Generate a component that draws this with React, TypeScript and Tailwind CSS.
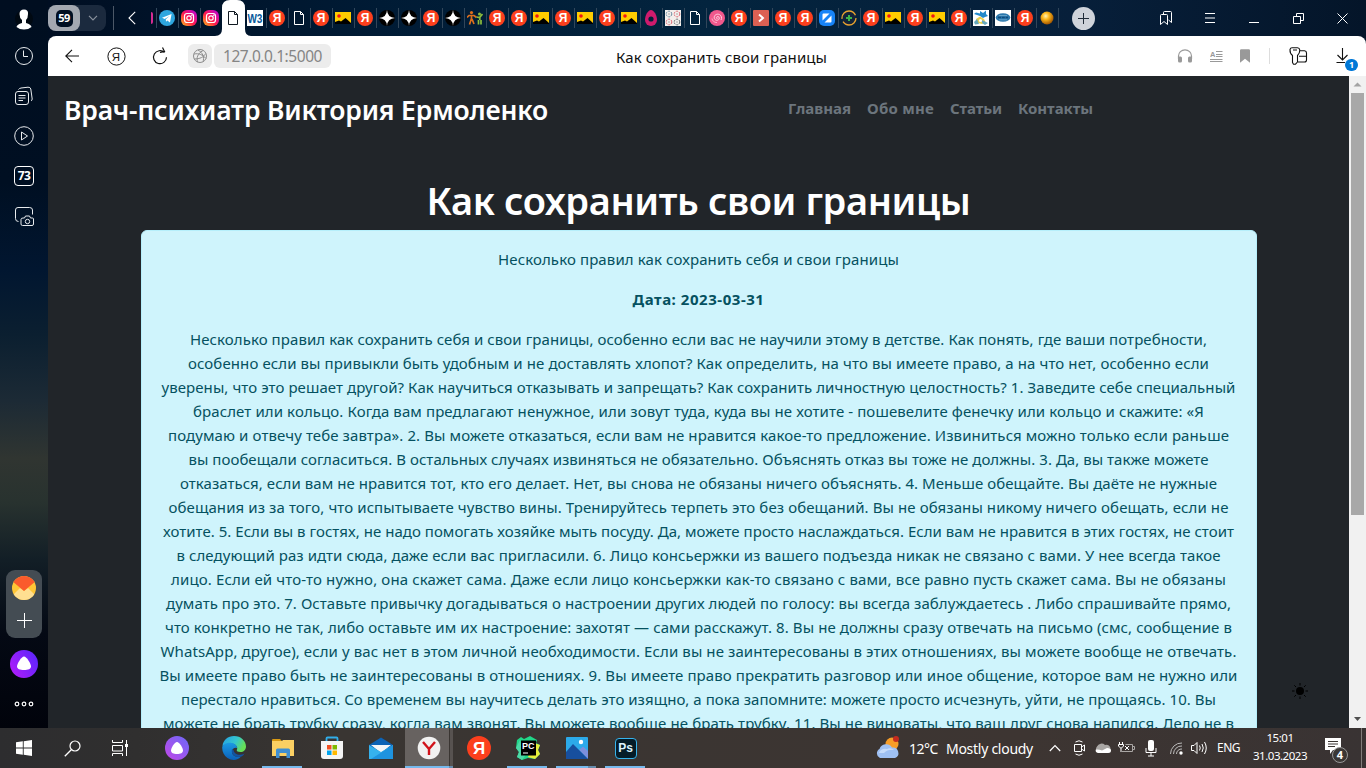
import { useLayoutEffect, useRef, useState } from "react";
import type { ReactNode } from "react";

/* One line of text whose tracking is adjusted so that it spans `w` pixels. */
function Fit({ w, children, className = "" }: { w: number; children: string; className?: string }) {
  const ref = useRef<HTMLSpanElement>(null);
  const [track, setTrack] = useState(0);
  useLayoutEffect(() => {
    if (ref.current) {
      const natural = ref.current.getBoundingClientRect().width - track * children.length;
      setTrack((w - natural) / children.length);
    }
  }, [w, children]);
  return (
    <span ref={ref} className={`inline-block whitespace-nowrap ${className}`} style={{ letterSpacing: `${track}px` }}>
      {children}
    </span>
  );
}

function Svg({ w, h, children, className = "" }: { w: number; h: number; children: ReactNode; className?: string }) {
  return (
    <svg width={w} height={h} viewBox={`0 0 ${w} ${h}`} fill="none" className={`shrink-0 ${className}`}>
      {children}
    </svg>
  );
}

const sans = "font-['Noto_Sans','Open_Sans',sans-serif]";

function YaLetter({ size, fill = "#fff", y }: { size: number; fill?: string; y: number }) {
  return (
    <text x="50%" y={y} textAnchor="middle" fontSize={size} fontWeight="700" fill={fill} fontFamily="Liberation Sans, sans-serif">
      Я
    </text>
  );
}

type Fav = "tg" | "ig" | "page" | "w3" | "ya" | "img" | "star" | "people" | "drop" | "pattern" | "spiral" | "arrow" | "blue" | "plus" | "cartoon" | "oval" | "gold";

function Favicon({ kind }: { kind: Fav }) {
  switch (kind) {
    case "tg":
      return (
        <Svg w={16} h={16}>
          <circle cx="8" cy="8" r="8" fill="#2ea6df" />
          <path d="M3 7.7L12.6 4 11 12.4 8.3 10.5 7 11.8 6.8 9.3 10.6 5.9 5.7 8.9z" fill="#fff" />
        </Svg>
      );
    case "ig":
      return (
        <Svg w={16} h={16}>
          <defs>
            <linearGradient id="ig" x1="0" y1="1" x2="1" y2="0">
              <stop offset="0" stopColor="#ffc21c" />
              <stop offset=".45" stopColor="#ff194b" />
              <stop offset="1" stopColor="#b500e8" />
            </linearGradient>
          </defs>
          <rect width="16" height="16" rx="6" fill="url(#ig)" />
          <rect x="3.5" y="3.5" width="9" height="9" rx="2.5" stroke="#fff" strokeWidth="1.2" />
          <circle cx="8" cy="8" r="2.2" stroke="#fff" strokeWidth="1.2" />
          <circle cx="10.8" cy="5.2" r=".7" fill="#fff" />
        </Svg>
      );
    case "page":
      return (
        <Svg w={12} h={16}>
          <path d="M1.5 1.5H7.5L10.5 4.5V14.5H1.5ZM7.5 1.5V4.5H10.5" stroke="currentColor" />
        </Svg>
      );
    case "w3":
      return (
        <Svg w={16} h={16}>
          <rect width="16" height="16" fill="#fff" />
          <text x="0.6" y="12.5" fontSize="12.5" fontWeight="700" fill="#075a9c" textLength="9.4" lengthAdjust="spacingAndGlyphs" fontFamily="Liberation Sans, sans-serif">W</text>
          <text x="9.7" y="12.5" fontSize="12.5" fontWeight="700" fill="#075a9c" textLength="5.6" lengthAdjust="spacingAndGlyphs" fontFamily="Liberation Sans, sans-serif">3</text>
        </Svg>
      );
    case "ya":
      return (
        <Svg w={16} h={16}>
          <circle cx="8" cy="8" r="8" fill="#fc3f1d" />
          <YaLetter size={12} y={12.2} />
        </Svg>
      );
    case "img":
      return (
        <Svg w={16} h={16}>
          <rect y="2" width="16" height="12" fill="#fc0" />
          <circle cx="4" cy="6" r="1.8" fill="#f01414" />
          <path d="M0 14V12L4 10.5 6 11.5 10.5 8 16 13V14Z" fill="#000" />
        </Svg>
      );
    case "star":
      return (
        <Svg w={16} h={16}>
          <circle cx="8" cy="8" r="8" fill="#000" />
          <path d="M8 0Q8.4 7.6 16 8 8.4 8.4 8 16 7.6 8.4 0 8 7.6 7.6 8 0Z" fill="#fff" />
          <path d="M8 4.5Q9 7 11.5 8 9 9 8 11.5 7 9 4.5 8 7 7 8 4.5Z" fill="#fff" />
        </Svg>
      );
    case "people":
      return (
        <Svg w={16} h={16}>
          <circle cx="4.5" cy="2.6" r="1.6" fill="#dd6f1c" />
          <path d="M0 7.500L2 5.500H7L9.500 7.500M4.500 5V9M4.300 9L2.500 14.500M5 9L7 14" stroke="#dd6f1c" strokeWidth="1.700" />
          <circle cx="12.500" cy="4" r="1.500" fill="#8cbf3c" />
          <path d="M9.500 7L12.500 7.500 15.500 4M12.800 7V10M11.500 10V14.500M14 10V14.500" stroke="#8cbf3c" strokeWidth="1.700" />
        </Svg>
      );
    case "drop":
      return (
        <Svg w={16} h={16}>
          <path d="M8 0C11 0 14 5.500 14 10A6 6 0 0 1 2 10C2 5.500 5 0 8 0Z" fill="#cf1b6d" />
          <circle cx="8" cy="9" r="2.600" fill="#03203a" />
        </Svg>
      );
    case "pattern":
      return (
        <Svg w={16} h={16}>
          <rect width="16" height="16" fill="#f3efec" />
          <circle cx="4" cy="4" r="2.800" stroke="#63869c" strokeDasharray="2 1" />
          <circle cx="12" cy="4" r="2.800" stroke="#d95d6b" strokeDasharray="2 1" />
          <circle cx="4" cy="12" r="2.800" stroke="#d95d6b" strokeDasharray="2 1" />
          <circle cx="12" cy="12" r="2.800" stroke="#5c6468" strokeDasharray="2 1" />
          <path d="M3 4H5M11 4H13M3 12H5M11 12H13" stroke="#aaa" />
        </Svg>
      );
    case "spiral":
      return (
        <Svg w={16} h={16}>
          <circle cx="8" cy="8" r="8" fill="#f0588c" />
          <path d="M8.500 8.500C7.500 9 6.800 7.500 8 6.800 9.500 6 11 7.500 10 9.200 8.800 11 5.500 10.500 5.200 7.800 5 5 8 3.400 10.500 4.600 12.500 5.500 13 8 12 10" stroke="#ffd3e2" strokeWidth="1" />
          <path d="M8 12.600C5 12.600 3.200 10.500 3 8.500" stroke="#ffb5ce" strokeWidth=".9" />
        </Svg>
      );
    case "arrow":
      return (
        <Svg w={16} h={16}>
          <rect width="16" height="16" rx="1" fill="#dc6053" />
          <path d="M6 4.500L10 8 6 11.500" stroke="#fff" strokeWidth="1.900" />
        </Svg>
      );
    case "blue":
      return (
        <Svg w={16} h={16}>
          <rect width="16" height="16" rx="5" fill="#1784f8" />
          <path d="M3.500 4.500Q3.500 3.500 4.500 3.500H10.500L3.500 10.500ZM12.500 5.500V11.500Q12.500 12.500 11.500 12.500H5.500Z" fill="#fff" />
        </Svg>
      );
    case "plus":
      return (
        <Svg w={16} h={16}>
          <circle cx="8" cy="8" r="7" fill="#14243a" stroke="#e9a32f" strokeWidth="1.300" strokeDasharray="18 3 20 3" />
          <path d="M8 5V11M5 8H11" stroke="#3bb54a" strokeWidth="2" />
        </Svg>
      );
    case "cartoon":
      return (
        <Svg w={16} h={16}>
          <rect width="16" height="16" fill="#fff" />
          <path d="M7 1L10 3 13 0.500 13 4 15 6 12 7 10 8 7 6 1 4 3 2.500 7 3.500Z" fill="#2389ca" />
          <path d="M3 9L7 6.500 11 9 13 13 9 14 5 13Z" fill="#e9cf4f" />
          <path d="M1 12L4 9 6 14 2 14.500ZM9 10L15 13 12 15 9 13Z" fill="#65a7be" />
          <circle cx="7.500" cy="10.500" r="1.600" fill="#fff" />
        </Svg>
      );
    case "oval":
      return (
        <Svg w={16} h={16}>
          <rect width="16" height="16" fill="#fff" />
          <ellipse cx="8" cy="7.500" rx="7.300" ry="4.300" fill="#2a77ac" />
          <path d="M4 5.500H12M4 9.800H12" stroke="#7fb3d3" strokeWidth=".7" />
          <path d="M3 7.500H13" stroke="#0f4a7c" strokeWidth="1.500" strokeDasharray="3 .8" />
        </Svg>
      );
    case "gold":
      return (
        <Svg w={16} h={16}>
          <defs>
            <radialGradient id="gold" cx=".4" cy=".35" r=".65">
              <stop offset="0" stopColor="#fff4ba" />
              <stop offset=".4" stopColor="#fdb91c" />
              <stop offset="1" stopColor="#a35500" />
            </radialGradient>
          </defs>
          <circle cx="8" cy="8" r="6.500" fill="url(#gold)" />
        </Svg>
      );
  }
}

const tabsBefore: Fav[] = ["tg", "ig", "ig"];
const tabsAfter: Fav[] = [
  "w3", "ya", "page", "ya", "img", "ya", "star", "star", "ya", "star", "people", "ya", "ya", "img", "ya", "img", "ya", "img",
  "drop", "pattern", "page", "spiral", "ya", "arrow", "ya", "ya", "blue", "plus", "ya", "img", "ya", "img", "ya", "cartoon", "oval", "ya", "gold",
];

function Tab({ kind, first = false }: { kind: Fav; first?: boolean }) {
  return (
    <div className="relative flex w-[22px] shrink-0 items-center justify-center text-white">
      {!first && <span className="absolute top-2 left-0 h-5 w-px bg-[#31465a]" />}
      <Favicon kind={kind} />
    </div>
  );
}

function TabBar() {
  return (
    <div className="flex h-9 shrink-0">
      <div className="mt-[5px] flex h-[26px] w-[58px] shrink-0 rounded-lg bg-[#1b2a3e]">
        <div className="flex w-8 items-center justify-center rounded-lg bg-[#a3a8b1]">
          <div className="flex h-[17px] w-[17px] items-center justify-center rounded-[5px] bg-[#000f22] text-[11px] font-bold tracking-[-0.5px] text-white">59</div>
        </div>
        <div className="flex flex-1 items-center justify-center">
          <Svg w={10} h={6}><path d="M1 .8L5 4.800 9 .8" stroke="#8a929d" strokeWidth="1.200" /></Svg>
        </div>
      </div>
      <div className="mt-1.5 ml-[7px] h-6 w-px shrink-0 bg-[#4c5867]" />
      <div className="flex w-[42px] shrink-0 items-center pl-[14px]">
        <Svg w={8} h={14}><path d="M7.200 .8L1 7 7.200 13.200" stroke="#fff" strokeWidth="1.100" /></Svg>
        <span className="ml-[15px] h-3 w-0.5 shrink-0 rounded-r-md bg-[#d52b93]" />
      </div>
      {tabsBefore.map((k, i) => <Tab key={i} kind={k} />)}
      <div className="relative flex w-[22px] shrink-0 items-center justify-center text-[#101820]">
        <svg width="36" height="36" viewBox="0 0 36 36" className="absolute top-0 -left-[7px] max-w-none">
          <path d="M0 36Q7 36 7 29V8Q7 0 15 0H22Q30 0 30 8V29Q30 36 36 36Z" fill="#fff" />
        </svg>
        <div className="relative"><Favicon kind="page" /></div>
      </div>
      {tabsAfter.map((k, i) => <Tab key={i} kind={k} first={i === 0} />)}
      <div className="mt-2 h-5 w-px shrink-0 bg-[#31465a]" />
      <div className="flex w-12 shrink-0 items-center justify-center">
        <Svg w={23} h={23}>
          <circle cx="11.500" cy="11.500" r="11.500" fill="#cfd3da" />
          <path d="M11.500 6V17M6 11.500H17" stroke="#202b38" />
        </Svg>
      </div>
      <div className="ml-[37px] flex w-[44px] shrink-0 items-center justify-center text-white">
        <Svg w={14} h={16}>
          <path d="M1.500 5.500Q1.500 4.500 2.500 4.500H7.500Q8.500 4.500 8.500 5.500V14.500L5 11.500 1.500 14.500ZM4.500 4V2.500Q4.500 1.500 5.500 1.500H11.500Q12.500 1.500 12.500 2.500V12.500L9.500 10" stroke="currentColor" strokeLinejoin="round" />
        </Svg>
      </div>
      <div className="flex w-[44px] shrink-0 items-center justify-center">
        <Svg w={10} h={12}><path d="M0 1.500H10M0 6H10M0 10.500H10" stroke="#fff" /></Svg>
      </div>
      <div className="flex w-[44px] shrink-0 items-center justify-center pt-2">
        <Svg w={10} h={1}><path d="M0 .5H10" stroke="#fff" /></Svg>
      </div>
      <div className="flex w-[44px] shrink-0 items-center justify-center">
        <Svg w={11} h={11}><path d="M.5 3.500H7.500V10.500H.5ZM3.500 3.500V.5H10.500V7.500H7.500" stroke="#fff" /></Svg>
      </div>
      <div className="flex w-[44px] shrink-0 items-center justify-center">
        <Svg w={11} h={11}><path d="M.5 .5L10.500 10.500M10.500 .5L.5 10.500" stroke="#fff" /></Svg>
      </div>
    </div>
  );
}

function AddressBar() {
  return (
    <div className="flex h-10 shrink-0 items-center rounded-t-lg bg-white">
      <Svg w={14} h={14} className="ml-[17px]"><path d="M14 7H.8M7 .8L.8 7 7 13.200" stroke="#111" strokeWidth="1.100" /></Svg>
      <svg width="19" height="19" viewBox="0 0 19 19" fill="none" className="ml-[28px] shrink-0">
        <circle cx="9.500" cy="9.500" r="8.600" stroke="#111" strokeWidth="1" />
        <text x="9" y="13.600" textAnchor="middle" fontSize="11.500" fill="#111" fontFamily="Liberation Sans, sans-serif">Я</text>
      </svg>
      <Svg w={16} h={19} className="ml-[26px]">
        <path d="M12.500 5.500A6.500 6.500 0 1 0 14.500 10.300M8 5.500L12.500 4.500 10.500 .5" stroke="#111" strokeWidth="1.200" />
      </Svg>
      <div className="ml-5 flex h-6 w-6 shrink-0 items-center justify-center rounded-md bg-[#ececec]">
        <Svg w={16} h={16}>
          <g stroke="#8e8e8e">
            <circle cx="8" cy="8" r="6.500" />
            <path d="M6 2C11 5 12.500 9 11 14M11 2.500C5 6 4.500 10 5.500 14M2 6C7 5 11 7 14 10.500M2 11C8 11 12 9 13.500 5.500" />
          </g>
        </Svg>
      </div>
      <div className="ml-0.5 flex h-6 w-[117px] shrink-0 items-center justify-center rounded-md bg-[#ececec] pt-0.5 text-[15.500px] text-[#858585]">
        <Fit w={99}>127.0.0.1:5000</Fit>
      </div>
      <div className="ml-[285px] w-[211px] shrink-0 pt-0.5 text-[15px] text-[#111]"><Fit w={211}>Как сохранить свои границы</Fit></div>
      <div className="ml-[350px] flex shrink-0 items-center text-[#999]">
        <Svg w={16} h={14}>
          <path d="M1.500 10V7A6.500 6.200 0 0 1 14.500 7V10" stroke="currentColor" strokeWidth="1.200" />
          <rect x="1" y="7.500" width="4" height="6" rx="1.500" fill="currentColor" />
          <rect x="11" y="7.500" width="4" height="6" rx="1.500" fill="currentColor" />
        </Svg>
        <Svg w={13} h={13} className="ml-[17px]">
          <path d="M6 1.500H12.500M6 4.500H12.500M6 6.500H12.500M0 9.500H12.500M0 11.500H12.500" stroke="currentColor" />
          <text x="0" y="7" fontSize="7.500" fontWeight="700" fill="currentColor" fontFamily="Liberation Sans, sans-serif">A</text>
        </Svg>
        <Svg w={10} h={14} className="ml-[17px]"><path d="M0 1.500Q0 .3 1.200 .3H8.800Q10 .3 10 1.500V13.800L5 9.800 0 13.800Z" fill="currentColor" /></Svg>
      </div>
      <div className="ml-[19px] h-4 w-px shrink-0 bg-[#ddd]" />
      <Svg w={19} h={18} className="ml-[19px]">
        <g stroke="#111" strokeWidth="1.100" strokeLinejoin="round">
          <path d="M1 2.500Q1.500 .8 3 .8H8.500Q10.500 .8 10.800 3 10.800 6.500 8.500 8.500V15L6.500 17.200H4.500L3.500 15.500V8.500Q.8 6.500 1 2.500ZM4 3H8" />
          <path d="M11 3.800H15.500Q17.500 4 17.500 6V13Q17.500 15 15.500 15H9M10 9.200H17.500" />
        </g>
      </Svg>
      <div className="relative ml-[27px] flex shrink-0">
        <Svg w={22} h={22}>
          <path d="M7.500 3V15M2.500 10L7.500 15 12.500 10M1.500 17.500H10" stroke="#111" strokeWidth="1.100" />
        </Svg>
        <span className="absolute top-[14px] left-[10px] flex h-3 w-[13px] items-center justify-center rounded-full bg-[#0078d7] text-[9px] font-bold text-white">1</span>
      </div>
    </div>
  );
}

function Sidebar() {
  return (
    <aside className="flex w-12 shrink-0 flex-col items-center bg-[linear-gradient(180deg,#000e20_0%,#000f22_25%,#011630_37%,#0b1f30_46%,#1c2a35_55%,#303531_63%,#28322f_69%,#121e26_77%,#040914_87%,#01030b_100%)] text-[#e8ebee]">
      <Svg w={20} h={22} className="mt-2">
        <circle cx="10" cy="11" r="9" fill="#000912" />
        <path d="M5.500 6Q5.500 1.500 10 1.500T14 6Q14 10 12 12V15Q17 16.500 17.500 19 14.500 21.500 10 21.500T2.500 19Q3 16.500 8 15V12Q5.500 10 5.500 6Z" fill="#fff" />
      </Svg>
      <Svg w={20} h={20} className="mt-4">
        <circle cx="10" cy="10" r="8.500" stroke="currentColor" />
        <path d="M9.500 4.500V10.500H14" stroke="currentColor" />
      </Svg>
      <Svg w={20} h={20} className="mt-5">
        <rect x="1.500" y="5.500" width="13" height="13" rx="2.500" stroke="currentColor" />
        <path d="M4.500 9.500H11.500M4.500 12H11.500M4.500 14.500H9M4.500 3.500Q5 2.500 7 2L14 1.200Q16.300 1 16.800 3L18.200 13Q18 14.500 17 15" stroke="currentColor" />
      </Svg>
      <Svg w={20} h={20} className="mt-5">
        <circle cx="10" cy="10" r="9.300" stroke="currentColor" />
        <path d="M7.500 6L13.500 10 7.500 14Z" stroke="currentColor" strokeLinejoin="round" />
      </Svg>
      <div className="mt-5 flex h-5 w-5 shrink-0 items-center justify-center rounded-[4px] border border-white text-[12px] font-bold tracking-[-0.5px] text-white">73</div>
      <Svg w={20} h={20} className="mt-5">
        <path d="M4.500 15.500Q1.500 15.500 1.500 12.500V4Q1.500 1.500 4 1.500H15.500Q18.500 1.500 18.500 4V8.500" stroke="currentColor" />
        <path d="M9 12H10.500L11.500 10H15.500L16.500 12H18.500Q19.500 12 19.500 13V18Q19.500 19.500 18 19.500H8.500Q7 19.500 7 18V13.500Q7 12 9 12Z" stroke="currentColor" />
        <circle cx="13.500" cy="15.500" r="2.200" stroke="currentColor" />
      </Svg>
      <div className="mt-[344px] flex h-[68px] w-9 shrink-0 flex-col items-center rounded-[9px] bg-[#444c53]">
        <Svg w={24} h={24} className="mt-1.5">
          <defs><clipPath id="mail"><circle cx="12" cy="12" r="12" /></clipPath></defs>
          <g clipPath="url(#mail)">
            <rect width="24" height="24" fill="#ffc636" />
            <path d="M0 20L8 12 12 15 16 12 24 20V24H0Z" fill="#ffdf91" />
            <path d="M0 5V0H24V5L12 15Z" fill="#fa5b2c" />
          </g>
        </Svg>
        <Svg w={15} h={15} className="mt-[13px]"><path d="M7.500 0V15M0 7.500H15" stroke="#fff" /></Svg>
      </div>
      <Svg w={28} h={28} className="mt-3">
        <defs><linearGradient id="alice" x1="0" y1=".8" x2="1" y2=".2"><stop stopColor="#b01dfa" /><stop offset="1" stopColor="#5b25fb" /></linearGradient></defs>
        <circle cx="14" cy="14" r="14" fill="url(#alice)" />
        <path d="M14 6.500C16.500 6.500 21 13.500 21 16.500 21 19 18 20 14 20S7 19 7 16.500C7 13.500 11.500 6.500 14 6.500Z" fill="#fff" />
      </Svg>
      <Svg w={20} h={6} className="mt-[23px]">
        <g stroke="#fff" strokeWidth="1.200"><circle cx="3" cy="3" r="1.800" /><circle cx="10" cy="3" r="1.800" /><circle cx="17" cy="3" r="1.800" /></g>
      </Svg>
    </aside>
  );
}

const article: [number, string][] = [
  [1017, "Несколько правил как сохранить себя и свои границы, особенно если вас не научили этому в детстве. Как понять, где ваши потребности,"],
  [1021, "особенно если вы привыкли быть удобным и не доставлять хлопот? Как определить, на что вы имеете право, а на что нет, особенно если"],
  [1074, "уверены, что это решает другой? Как научиться отказывать и запрещать? Как сохранить личностную целостность? 1. Заведите себе специальный"],
  [1011, "браслет или кольцо. Когда вам предлагают ненужное, или зовут туда, куда вы не хотите - пошевелите фенечку или кольцо и скажите: «Я"],
  [1061, "подумаю и отвечу тебе завтра». 2. Вы можете отказаться, если вам не нравится какое-то предложение. Извиниться можно только если раньше"],
  [1020, "вы пообещали согласиться. В остальных случаях извиняться не обязательно. Объяснять отказ вы тоже не должны. 3. Да, вы также можете"],
  [1037, "отказаться, если вам не нравится тот, кто его делает. Нет, вы снова не обязаны ничего объяснять. 4. Меньше обещайте. Вы даёте не нужные"],
  [1060, "обещания из за того, что испытываете чувство вины. Тренируйтесь терпеть это без обещаний. Вы не обязаны никому ничего обещать, если не"],
  [1071, "хотите. 5. Если вы в гостях, не надо помогать хозяйке мыть посуду. Да, можете просто наслаждаться. Если вам не нравится в этих гостях, не стоит"],
  [1044, "в следующий раз идти сюда, даже если вас пригласили. 6. Лицо консьержки из вашего подъезда никак не связано с вами. У нее всегда такое"],
  [1055, "лицо. Если ей что-то нужно, она скажет сама. Даже если лицо консьержки как-то связано с вами, все равно пусть скажет сама. Вы не обязаны"],
  [1065, "думать про это. 7. Оставьте привычку догадываться о настроении других людей по голосу: вы всегда заблуждаетесь . Либо спрашивайте прямо,"],
  [1067, "что конкретно не так, либо оставьте им их настроение: захотят — сами расскажут. 8. Вы не должны сразу отвечать на письмо (смс, сообщение в"],
  [1076, "WhatsApp, другое), если у вас нет в этом личной необходимости. Если вы не заинтересованы в этих отношениях, вы можете вообще не отвечать."],
  [1078, "Вы имеете право быть не заинтересованы в отношениях. 9. Вы имеете право прекратить разговор или иное общение, которое вам не нужно или"],
  [1035, "перестало нравиться. Со временем вы научитесь делать это изящно, а пока запомните: можете просто исчезнуть, уйти, не прощаясь. 10. Вы"],
  [1071, "можете не брать трубку сразу, когда вам звонят. Вы можете вообще не брать трубку. 11. Вы не виноваты, что ваш друг снова напился. Дело не в"],
];

function Page() {
  return (
    <div className="relative flex h-[652px] shrink-0 overflow-hidden bg-[#212529]">
      <main className="flex w-[1301px] flex-col">
        <header className="flex h-[88px] shrink-0 pt-3">
          <div className="ml-4 h-[42px] w-[484px] shrink-0 text-[26.500px] leading-[44px] font-semibold text-white">
            <Fit w={484}>Врач-психиатр Виктория Ермоленко</Fit>
          </div>
          <nav className="ml-60 flex gap-4 text-[15px] leading-[41px] font-bold text-[#6c757d]">
            <Fit w={63}>Главная</Fit>
            <Fit w={67}>Обо мне</Fit>
            <Fit w={52}>Статьи</Fit>
            <Fit w={75}>Контакты</Fit>
          </nav>
        </header>
        <h1 className="mt-3 h-[54px] shrink-0 text-center text-[38px] leading-[48px] font-semibold text-white">
          <Fit w={544}>Как сохранить свои границы</Fit>
        </h1>
        <section className="mx-auto w-[1116px] shrink-0 rounded-md border border-[#b6effb] bg-[#cff4fc] pt-4 text-center text-[15px] leading-6 text-[#055160]">
          <p className="mb-4 h-6"><Fit w={401}>Несколько правил как сохранить себя и свои границы</Fit></p>
          <p className="mb-4 h-6 font-bold"><Fit w={132}>Дата: 2023-03-31</Fit></p>
          <div className="flex h-[560px] flex-col items-center">
            {article.map(([w, line], i) => (
              <div key={i} className="h-6 shrink-0"><Fit w={w}>{line}</Fit></div>
            ))}
          </div>
        </section>
      </main>
      <div className="flex w-[17px] shrink-0 flex-col items-center bg-[#f1f1f1]">
        <Svg w={17} h={17}><path d="M4.500 10.500L8.500 6.500 12.500 10.500Z" fill="#a3a3a3" /></Svg>
        <div className="h-[422px] w-[13px] bg-[#a8a8a8]" />
        <Svg w={17} h={17} className="mt-auto"><path d="M5 6L8.500 10 12 6Z" fill="#505050" /></Svg>
      </div>
      <Svg w={16} h={16} className="absolute top-[607px] left-[1244px]">
        <circle cx="8" cy="8" r="4" fill="#000" />
        <path d="M8 0V2.500M8 13.500V16M0 8H2.500M13.500 8H16M2.300 2.300L4 4M12 12L13.700 13.700M2.300 13.700L4 12M12 4L13.700 2.300" stroke="#000" />
      </Svg>
    </div>
  );
}

function TaskItem({ children, bar = "" }: { children: ReactNode; bar?: string }) {
  return (
    <div className="relative flex w-[49px] shrink-0 items-center justify-center">
      {children}
      {bar && <span className={`absolute bottom-0 left-1 h-0.5 w-10 ${bar}`} />}
    </div>
  );
}

function Taskbar() {
  return (
    <footer className="flex h-10 shrink-0 bg-[linear-gradient(90deg,#2d2d2f_0%,#302f2f_10%,#393532_25%,#3b3532_50%,#3d3532_75%,#393333_100%)] text-white">
      <div className="flex w-12 shrink-0 items-center justify-center">
        <Svg w={16} h={16}><path d="M0 2.300L6.800 1.300V7.500H0ZM7.700 1.200L16 0V7.500H7.700ZM0 8.500H6.800V14.700L0 13.700ZM7.700 8.500H16V16L7.700 14.800Z" fill="#fff" /></Svg>
      </div>
      <div className="flex w-12 shrink-0 items-center justify-center">
        <Svg w={17} h={17}><circle cx="11" cy="6" r="5" stroke="#fff" strokeWidth="1.200" /><path d="M7.500 9.500L.8 16.200" stroke="#fff" strokeWidth="1.300" /></Svg>
      </div>
      <div className="flex w-12 shrink-0 items-center justify-center">
        <Svg w={17} h={16}>
          <path d="M.5 0V2.500H10.500V0M.5 5.500H10.500V11H.5ZM.5 16V13.500H10.500V16M14.500 0V16" stroke="#fff" />
          <rect x="13" y="4" width="3" height="3" fill="#fff" />
        </Svg>
      </div>
      <div className="flex w-[65px] shrink-0 items-center justify-center">
        <Svg w={24} h={24}>
          <defs><linearGradient id="al2" x1="0" y1="1" x2="1" y2="0"><stop stopColor="#c247e8" /><stop offset="1" stopColor="#6b69f7" /></linearGradient></defs>
          <circle cx="12" cy="12" r="12" fill="url(#al2)" />
          <path d="M12 6C14.300 6 18 12 18 14.500 18 17 15.500 18 12 18S6 17 6 14.500C6 12 9.700 6 12 6Z" fill="#fff" />
        </Svg>
      </div>
      <TaskItem>
        <Svg w={24} h={24}>
          <defs>
            <linearGradient id="ed1" x1="0" y1="0" x2="1" y2=".4"><stop stopColor="#249ee4" /><stop offset=".6" stopColor="#35c6cf" /><stop offset="1" stopColor="#66df57" /></linearGradient>
            <linearGradient id="ed2" x1="0" y1="0" x2="0" y2="1"><stop stopColor="#1b9ae4" /><stop offset="1" stopColor="#0b60b8" /></linearGradient>
          </defs>
          <path d="M.5 10C1 4 6 0 12 0 19 0 24 5 24 10.500 24 14 21.500 16 18.500 16 16 16 14.300 15.200 14.800 14 16.500 11 13.500 7.500 9 7.500 5 7.500 2 9 .5 10Z" fill="url(#ed1)" />
          <path d="M.2 12C0 9 4 6.500 8.500 6.800 12.500 7 15.500 10 15 12 13 11 10 12.500 10 15.500 10 19.500 14 22 19 20.500 16 24.500 10 25 5.500 22 2 19.500 .3 16 .2 12Z" fill="url(#ed2)" />
          <path d="M10 13C8.500 18 13 22.500 19.500 20.500 20.500 20 22 18.500 22.500 17.500 18 20 12 18.500 11.500 14Z" fill="#1253a1" />
        </Svg>
      </TaskItem>
      <TaskItem bar="bg-[#76b9ed]">
        <Svg w={22} h={20}>
          <path d="M0 2Q0 1 1 1H8L10 3H0Z" fill="#d99a13" />
          <path d="M0 3H10L11 2H22V18H0Z" fill="#fbd063" />
          <path d="M4 20V12Q4 10.500 5.500 10.500H16.500Q18 10.500 18 12V20H14.500V15H7.500V20Z" fill="#3f8fd2" />
        </Svg>
      </TaskItem>
      <TaskItem>
        <Svg w={24} h={24}>
          <path d="M6.500 5V2.500Q6.500 1.500 7.500 1.500H16.500Q17.500 1.500 17.500 2.500V5" stroke="#31aeea" strokeWidth="1.800" />
          <path d="M1 5H23V20Q23 23 20 23H4Q1 23 1 20Z" fill="#f5f5f5" />
          <path d="M7 9H11.500V13.500H7Z" fill="#f25022" /><path d="M12.500 9H17V13.500H12.500Z" fill="#7fba00" />
          <path d="M7 14.500H11.500V19H7Z" fill="#00a4ef" /><path d="M12.500 14.500H17V19H12.500Z" fill="#ffb900" />
        </Svg>
      </TaskItem>
      <TaskItem>
        <Svg w={24} h={23}>
          <path d="M0 8L12 .5 24 8V12H0Z" fill="#0d63b5" />
          <path d="M2 8H22L12 16Z" fill="#f4f6f8" />
          <path d="M0 8L12 15 24 8V22H0Z" fill="#36b2ee" /><path d="M24 8V22H2Z" fill="#1e93df" />
        </Svg>
      </TaskItem>
      <div className="relative flex w-[49px] shrink-0">
        <div className="flex w-11 items-center justify-center bg-[#676260]" />
        <div className="ml-px w-[3px] bg-[#575250]" />
        <span className="absolute bottom-0 left-0 h-0.5 w-11 bg-[#76b9ed]" />
        <span className="absolute right-px bottom-0 h-0.5 w-1 bg-[#668cad]" />
        <Svg w={24} h={24} className="absolute top-2 left-3">
          <circle cx="12" cy="12" r="11.300" fill="#f1f1f1" />
          <path d="M6 6L12 13 18 6M12 12V19" stroke="#d1121a" strokeWidth="2.400" />
        </Svg>
      </div>
      <TaskItem>
        <Svg w={24} h={24}><circle cx="12" cy="12" r="12" fill="#fc3f1d" /><YaLetter size={17} y={18} /></Svg>
      </TaskItem>
      <TaskItem bar="bg-[#76b9ed]">
        <Svg w={24} h={24}>
          <path d="M1 4L5 1 8 3 14 0 21 4 20 7 24 9 22 14 24 18 19 23 12 22 6 24 1 21 3 16 0 12Z" fill="#21d789" />
          <path d="M18 7L24 9 22 14 24 18 19 23 12 21Z" fill="#e8ed3b" />
          <path d="M0 12L3 16 1 21 6 24 9 20 4 4Z" fill="#4cd9a6" />
          <rect x="5" y="4.500" width="15" height="15" fill="#000" />
          <text x="6" y="12.500" fontSize="9" fontWeight="700" fill="#fff" fontFamily="Liberation Sans, sans-serif">PC</text>
          <path d="M7 17H12" stroke="#fff" />
        </Svg>
      </TaskItem>
      <TaskItem bar="bg-[linear-gradient(90deg,#76b9ed_80%,#668cad_80%)]">
        <Svg w={22} h={22}>
          <rect width="22" height="22" rx="1" fill="#2caaea" />
          <path d="M13 13L17 9.500 22 14V22Z" fill="#7c8fdc" /><path d="M0 15L7 7 22 22H0Z" fill="#174f9e" />
          <circle cx="15" cy="5" r="2.200" fill="#fff" />
        </Svg>
      </TaskItem>
      <TaskItem bar="bg-[#76b9ed]">
        <div className="flex h-[21px] w-[22px] items-center justify-center rounded-[4px] border-[1.500px] border-[#36b4ed] bg-[#051c28] font-['Liberation_Sans',sans-serif] text-[12px] font-bold text-[#def4ff]">Ps</div>
      </TaskItem>
      <div className={`flex w-[716px] shrink-0 items-center ${sans}`}>
        <Svg w={26} h={26} className="ml-[225px]">
          <circle cx="17" cy="9" r="6.500" fill="#f79d28" /><circle cx="21" cy="4" r="3" fill="#c42b1f" />
          <path d="M5 23A5 5 0 0 1 4.500 14 7 7 0 0 1 17 12.500 5.500 5.500 0 0 1 20 23Z" fill="#9fc0f3" />
          <path d="M4 18A6 5 0 0 1 12 14 6 5 0 0 1 19 15Q13 14 9 18Z" fill="#c7dcfb" />
        </Svg>
        <div className="ml-[8px] pt-px text-[14px]"><Fit w={29}>12°C</Fit></div>
        <div className="ml-[8px] pt-px text-[14px]"><Fit w={87}>Mostly cloudy</Fit></div>
        <Svg w={12} h={8} className="ml-4"><path d="M.8 7L6 1.500 11.200 7" stroke="#fff" strokeWidth="1.200" /></Svg>
        <Svg w={14} h={16} className="ml-[12px]">
          <path d="M1.500 4.500H8.500V11.500H1.500ZM8.500 7L11.500 5V11L8.500 9M2.500 2Q6 -.5 9.500 2M2.500 14Q6 16.500 9.500 14" stroke="#fff" />
        </Svg>
        <Svg w={16} h={12} className="ml-[8px]">
          <path d="M4 11A4 4 0 0 1 2 4.500 5 5 0 0 1 10 3 4 4 0 0 1 15.500 7 3 3 0 0 1 13 11Z" fill="#a9a6a4" />
          <path d="M3 11Q0 10 .8 7.500 4 7 7 8.500L12 6Q16 6 16 8.500 16 11 13 11Z" fill="#fff" />
        </Svg>
        <Svg w={18} h={14} className="ml-[7px]">
          <path d="M7.500 3.500H14.500V10.500H4M14.500 5.500H16.500V8.500H14.500" stroke="#aaa7a5" />
          <path d="M1.500 1V3M4.500 1V3M.5 3.500H5.500V5L3.500 7H2.500L.5 5ZM3 7V11M7 5L11 9M11 5L7 9" stroke="#fff" />
        </Svg>
        <Svg w={12} h={17} className="ml-[9px]">
          <rect x="3" y="0" width="6" height="11" rx="2" fill="#fff" /><path d="M1 8V12.500H11V8M6 12V16M3 16H9" stroke="#fff" />
        </Svg>
        <Svg w={14} h={14} className="ml-[12px]">
          <g stroke="#bbb"><path d="M1.500 13A11 11 0 0 1 13 2M4.500 13A8 8 0 0 1 13 5M7.500 13A5 5 0 0 1 13 8" /></g><circle cx="12" cy="12" r="1.700" fill="#fff" />
        </Svg>
        <Svg w={17} h={14} className="ml-[8px]">
          <path d="M.5 4.500H3L6 1.500V12.500L3 9.500H.5ZM8.500 4.500Q10 7 8.500 9.500M11 3Q13.500 7 11 11M13.500 1Q17 7 13.500 13" stroke="#fff" />
        </Svg>
        <div className="ml-[9px] text-[12px]"><Fit w={23}>ENG</Fit></div>
        <div className="-mt-0.5 ml-[12px] flex w-[56px] shrink-0 flex-col items-center text-[11.500px] leading-[18px]">
          <Fit w={27}>15:01</Fit>
          <Fit w={54}>31.03.2023</Fit>
        </div>
        <div className="relative ml-[17px] h-6 w-6 shrink-0 pt-0.5">
          <Svg w={17} h={17}><path d="M0 0H16V12H8L5 16V12H0Z" fill="#fff" /><path d="M3 3.500H13M3 6H13M3 8.500H10" stroke="#3b3532" /></Svg>
          <span className="absolute top-[11px] left-[7px] flex h-4 w-4 items-center justify-center rounded-full border border-[#999] bg-[#3b3735] text-[11px] font-bold">4</span>
        </div>
        <div className="ml-[12px] h-10 w-px bg-[#817d7b]" />
      </div>
    </footer>
  );
}

export default function App() {
  return (
    <div className={`flex h-[768px] w-[1366px] flex-col overflow-hidden bg-[#001126] ${sans}`}>
      <div className="flex h-[728px] shrink-0">
        <Sidebar />
        <div className="flex w-[1318px] shrink-0 flex-col bg-[linear-gradient(90deg,#000e22_0%,#001b35_25%,#03243e_50%,#071f3a_78%,#041529_100%)]">
          <TabBar />
          <AddressBar />
          <Page />
        </div>
      </div>
      <Taskbar />
    </div>
  );
}
